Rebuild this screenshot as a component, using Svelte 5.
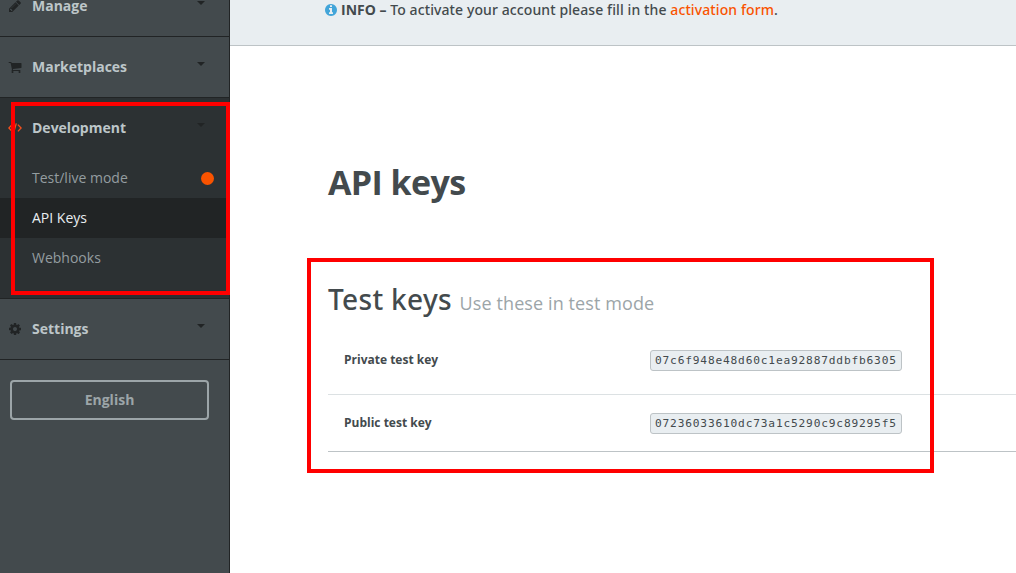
<script>
  const cart = 'M704 1536q0 52-38 90t-90 38-90-38-38-90 38-90 90-38 90 38 38 90zm896 0q0 52-38 90t-90 38-90-38-38-90 38-90 90-38 90 38 38 90zm128-1088v512q0 24-16.5 42.5t-40.500 21.500l-1044 122q13 60 13 70 0 16-24 64h920q26 0 45 19t19 45-19 45-45 19h-1024q-26 0-45-19t-19-45q0-11 8-31.500t16-36 21.500-40 15.500-29.500l-177-823h-204q-26 0-45-19t-19-45 19-45 45-19h256q16 0 28.500 6.500t19.500 15.500 13 24.500 8 26 5.500 29.500 4.500 26h1201q26 0 45 19t19 45z';
  const pencil = 'M491 1536l91-91-235-235-91 91v107h128v128h107zm523-928q0-22-22-22-10 0-17 7l-542 542q-7 7-7 17 0 22 22 22 10 0 17-7l542-542q7-7 7-17zm-54-192l416 416-832 832h-416v-416zm683 96q0 53-37 90l-166 166-416-416 166-165q36-38 90-38 53 0 91 38l235 234q37 39 37 91z';
  const cog = 'M1152 896q0-106-75-181t-181-75-181 75-75 181 75 181 181 75 181-75 75-181zm512-109v222q0 12-8 23t-20 13l-185 28q-19 54-39 91 35 50 107 138 10 12 10 25t-9 23q-27 37-99 108t-94 71q-12 0-26-9l-138-108q-44 23-91 38-16 136-29 186-7 28-36 28h-222q-14 0-24.500-8.500t-11.500-21.500l-28-184q-49-16-90-37l-141 107q-10 9-25 9-14 0-25-11-126-114-165-168-7-10-7-23 0-12 8-23 15-21 51-66.500t54-70.500q-27-50-41-99l-183-27q-13-2-21-12.500t-8-23.500v-222q0-12 8-23t19-13l186-28q14-46 39-92-40-57-107-138-10-12-10-24 0-10 9-23 26-36 98.500-107.500t94.500-71.500q13 0 26 10l138 107q44-23 91-38 16-136 29-186 7-28 36-28h222q14 0 24.500 8.500t11.500 21.500l28 184q49 16 90 37l142-107q9-9 24-9 13 0 25 10 129 119 165 170 7 8 7 22 0 12-8 23-15 21-51 66.500t-54 70.500q26 50 41 98l183 28q13 2 21 12.500t8 23.500z';
  const info = 'M1152 1376v-160q0-14-9-23t-23-9h-96v-512q0-14-9-23t-23-9h-320q-14 0-23 9t-9 23v160q0 14 9 23t23 9h96v320h-96q-14 0-23 9t-9 23v160q0 14 9 23t23 9h448q14 0 23-9t9-23zm-128-896v-160q0-14-9-23t-23-9h-192q-14 0-23 9t-9 23v160q0 14 9 23t23 9h192q14 0 23-9t9-23zm640 416q0 209-103 385.500t-279.500 279.500-385.500 103-385.500-103-279.500-279.500-103-385.500 103-385.500 279.500-279.500 385.500-103 385.500 103 279.500 279.500 103 385.500z';

  const menu = [
    { label: 'Manage', icon: pencil },
    { label: 'Marketplaces', icon: cart },
    {
      label: 'Development',
      open: true,
      items: [
        { label: 'Test/live mode', dot: true },
        { label: 'API Keys', active: true },
        { label: 'Webhooks' }
      ]
    },
    { label: 'Settings', icon: cog }
  ];

  const keys = [
    { label: 'Private test key', value: '07c6f948e48d60c1ea92887ddbfb6305' },
    { label: 'Public test key', value: '07236033610dc73a1c5290c9c89295f5' }
  ];
</script>

<div class="page">
  <nav class="sidebar">
    {#each menu as section}
      <section class:open={section.open}>
        <div class="head">
          {#if section.icon}
            <svg class="icon" viewBox="0 0 1792 1792"><path d={section.icon} /></svg>
          {:else}
            <svg class="icon code" viewBox="0 0 14 14"><path d="M4.1 3.600L.9 7l3.200 3.400M9.900 3.600L13.100 7l-3.200 3.400M8.300 2.300L5.700 11.700" /></svg>
          {/if}
          <span class="title">{section.label}</span>
          <span class="caret"></span>
        </div>
        {#if section.items}
          <ul>
            {#each section.items as item}
              <li class:active={item.active}>
                <span>{item.label}</span>
                {#if item.dot}<i class="dot"></i>{/if}
              </li>
            {/each}
          </ul>
        {/if}
      </section>
    {/each}
    <button>English</button>
  </nav>

  <main>
    <div class="notice">
      <svg viewBox="0 0 1792 1792"><path d={info} /></svg>
      <p><b>INFO –</b> To activate your account please fill in the <a href="#activation">activation form</a>.</p>
    </div>
    <div class="content">
      <h1>API keys</h1>
      <h2>Test keys <small>Use these in test mode</small></h2>
      <div class="keys">
        {#each keys as key}
          <div class="row">
            <strong>{key.label}</strong>
            <code>{key.value}</code>
          </div>
        {/each}
      </div>
    </div>
  </main>

  <div class="mark nav-mark"></div>
  <div class="mark keys-mark"></div>
</div>

<style>
  :global(body) { margin: 0; }
  .page {
    position: relative;
    display: flex;
    width: 1016px;
    height: 573px;
    overflow: hidden;
    background: #fff;
    color: #434a4d;
    font-family: "Open Sans", "Noto Sans", sans-serif;
    font-size: 14px;
  }
  .sidebar {
    box-sizing: border-box;
    width: 230px;
    flex: none;
    display: flex;
    flex-direction: column;
    margin-top: -24px;
    background: #434a4d;
    border-right: 1px solid #212425;
  }
  section { border-bottom: 1px solid #212425; }
  .open { background: #2c3133; padding-bottom: 20px; }
  .head {
    display: flex;
    align-items: center;
    height: 60px;
    padding-left: 8px;
    color: #bdc6c9;
    font-weight: 700;
  }
  .icon { width: 14px; height: 14px; fill: #212425; flex: none; margin-right: 10px; }
  .code { fill: none; stroke: #f4511e; stroke-width: 1.3; }
  .title { flex: 1; padding-bottom: 2px; }
  .caret {
    border: 4px solid transparent;
    border-top: 4px solid #212425;
    border-bottom: 0;
    margin-right: 24px;
    margin-bottom: 6px;
  }
  ul { list-style: none; margin: 0; padding: 0; }
  li {
    display: flex;
    align-items: center;
    justify-content: space-between;
    height: 40px;
    padding: 0 15px 0 32px;
    color: #949da0;
  }
  li span { padding-bottom: 2px; }
  .active { background: #212425; color: #e9eef1; }
  .dot { width: 13px; height: 13px; border-radius: 50%; background: #f95300; }
  button {
    box-sizing: border-box;
    width: 199px;
    height: 40px;
    margin: 20px 0 0 10px;
    padding: 0 0 2px;
    background: none;
    border: 2px solid #9ca5a8;
    border-radius: 4px;
    color: #9ca5a8;
    font: 700 14px "Open Sans", sans-serif;
  }
  main { flex: 1; min-width: 0; }
  .notice {
    box-sizing: border-box;
    display: flex;
    height: 46px;
    padding-left: 94px;
    background: #e9eef1;
    border-bottom: 1px solid #bdc3c6;
  }
  .notice svg { width: 14px; height: 14px; fill: #42a5d9; margin: 3px 3px 0 0; }
  .notice p { margin: 0; line-height: 20px; font-family: "Noto Sans", sans-serif; font-weight: 500; letter-spacing: 0.1px; white-space: nowrap; }
  b { font-family: "Open Sans", sans-serif; font-weight: 700; letter-spacing: 0; }
  a { color: #f95300; text-decoration: none; }
  .content { padding: 112px 0 0 98px; }
  h1 { margin: 0; font-size: 34px; line-height: 48px; font-weight: 700; letter-spacing: -0.6px; }
  h2 { margin: 69px 0 0; font-family: "Noto Sans", sans-serif; font-size: 28px; line-height: 48px; font-weight: 500; letter-spacing: 0.33px; white-space: nowrap; }
  small { font-family: "Open Sans", sans-serif; font-size: 18px; font-weight: 400; letter-spacing: 0.1px; color: #9ca5a8; }
  .row {
    box-sizing: border-box;
    display: flex;
    align-items: flex-start;
    height: 57px;
    padding: 18px 0 0 16px;
    border-bottom: 1px solid #bdc3c6;
  }
  .row:first-child { height: 68px; padding-top: 23px; border-bottom-color: #dce1e3; }
  strong { width: 306px; margin-top: 1px; font-size: 12px; line-height: 18px; }
  code {
    box-sizing: border-box;
    width: 252px;
    height: 21px;
    padding: 0 4px;
    line-height: 20px;
    border: 1px solid #bdc3c6;
    border-radius: 3px;
    background: #e9eef1;
    font-family: "DejaVu Sans Mono", monospace;
    font-size: 11.2px;
    letter-spacing: 0.82px;
    white-space: nowrap;
  }
  .mark { position: absolute; box-sizing: border-box; border: 4px solid #f00; }
  .nav-mark { left: 11px; top: 102px; width: 219px; height: 193px; }
  .keys-mark { left: 307px; top: 258px; width: 627px; height: 215px; }
</style>
